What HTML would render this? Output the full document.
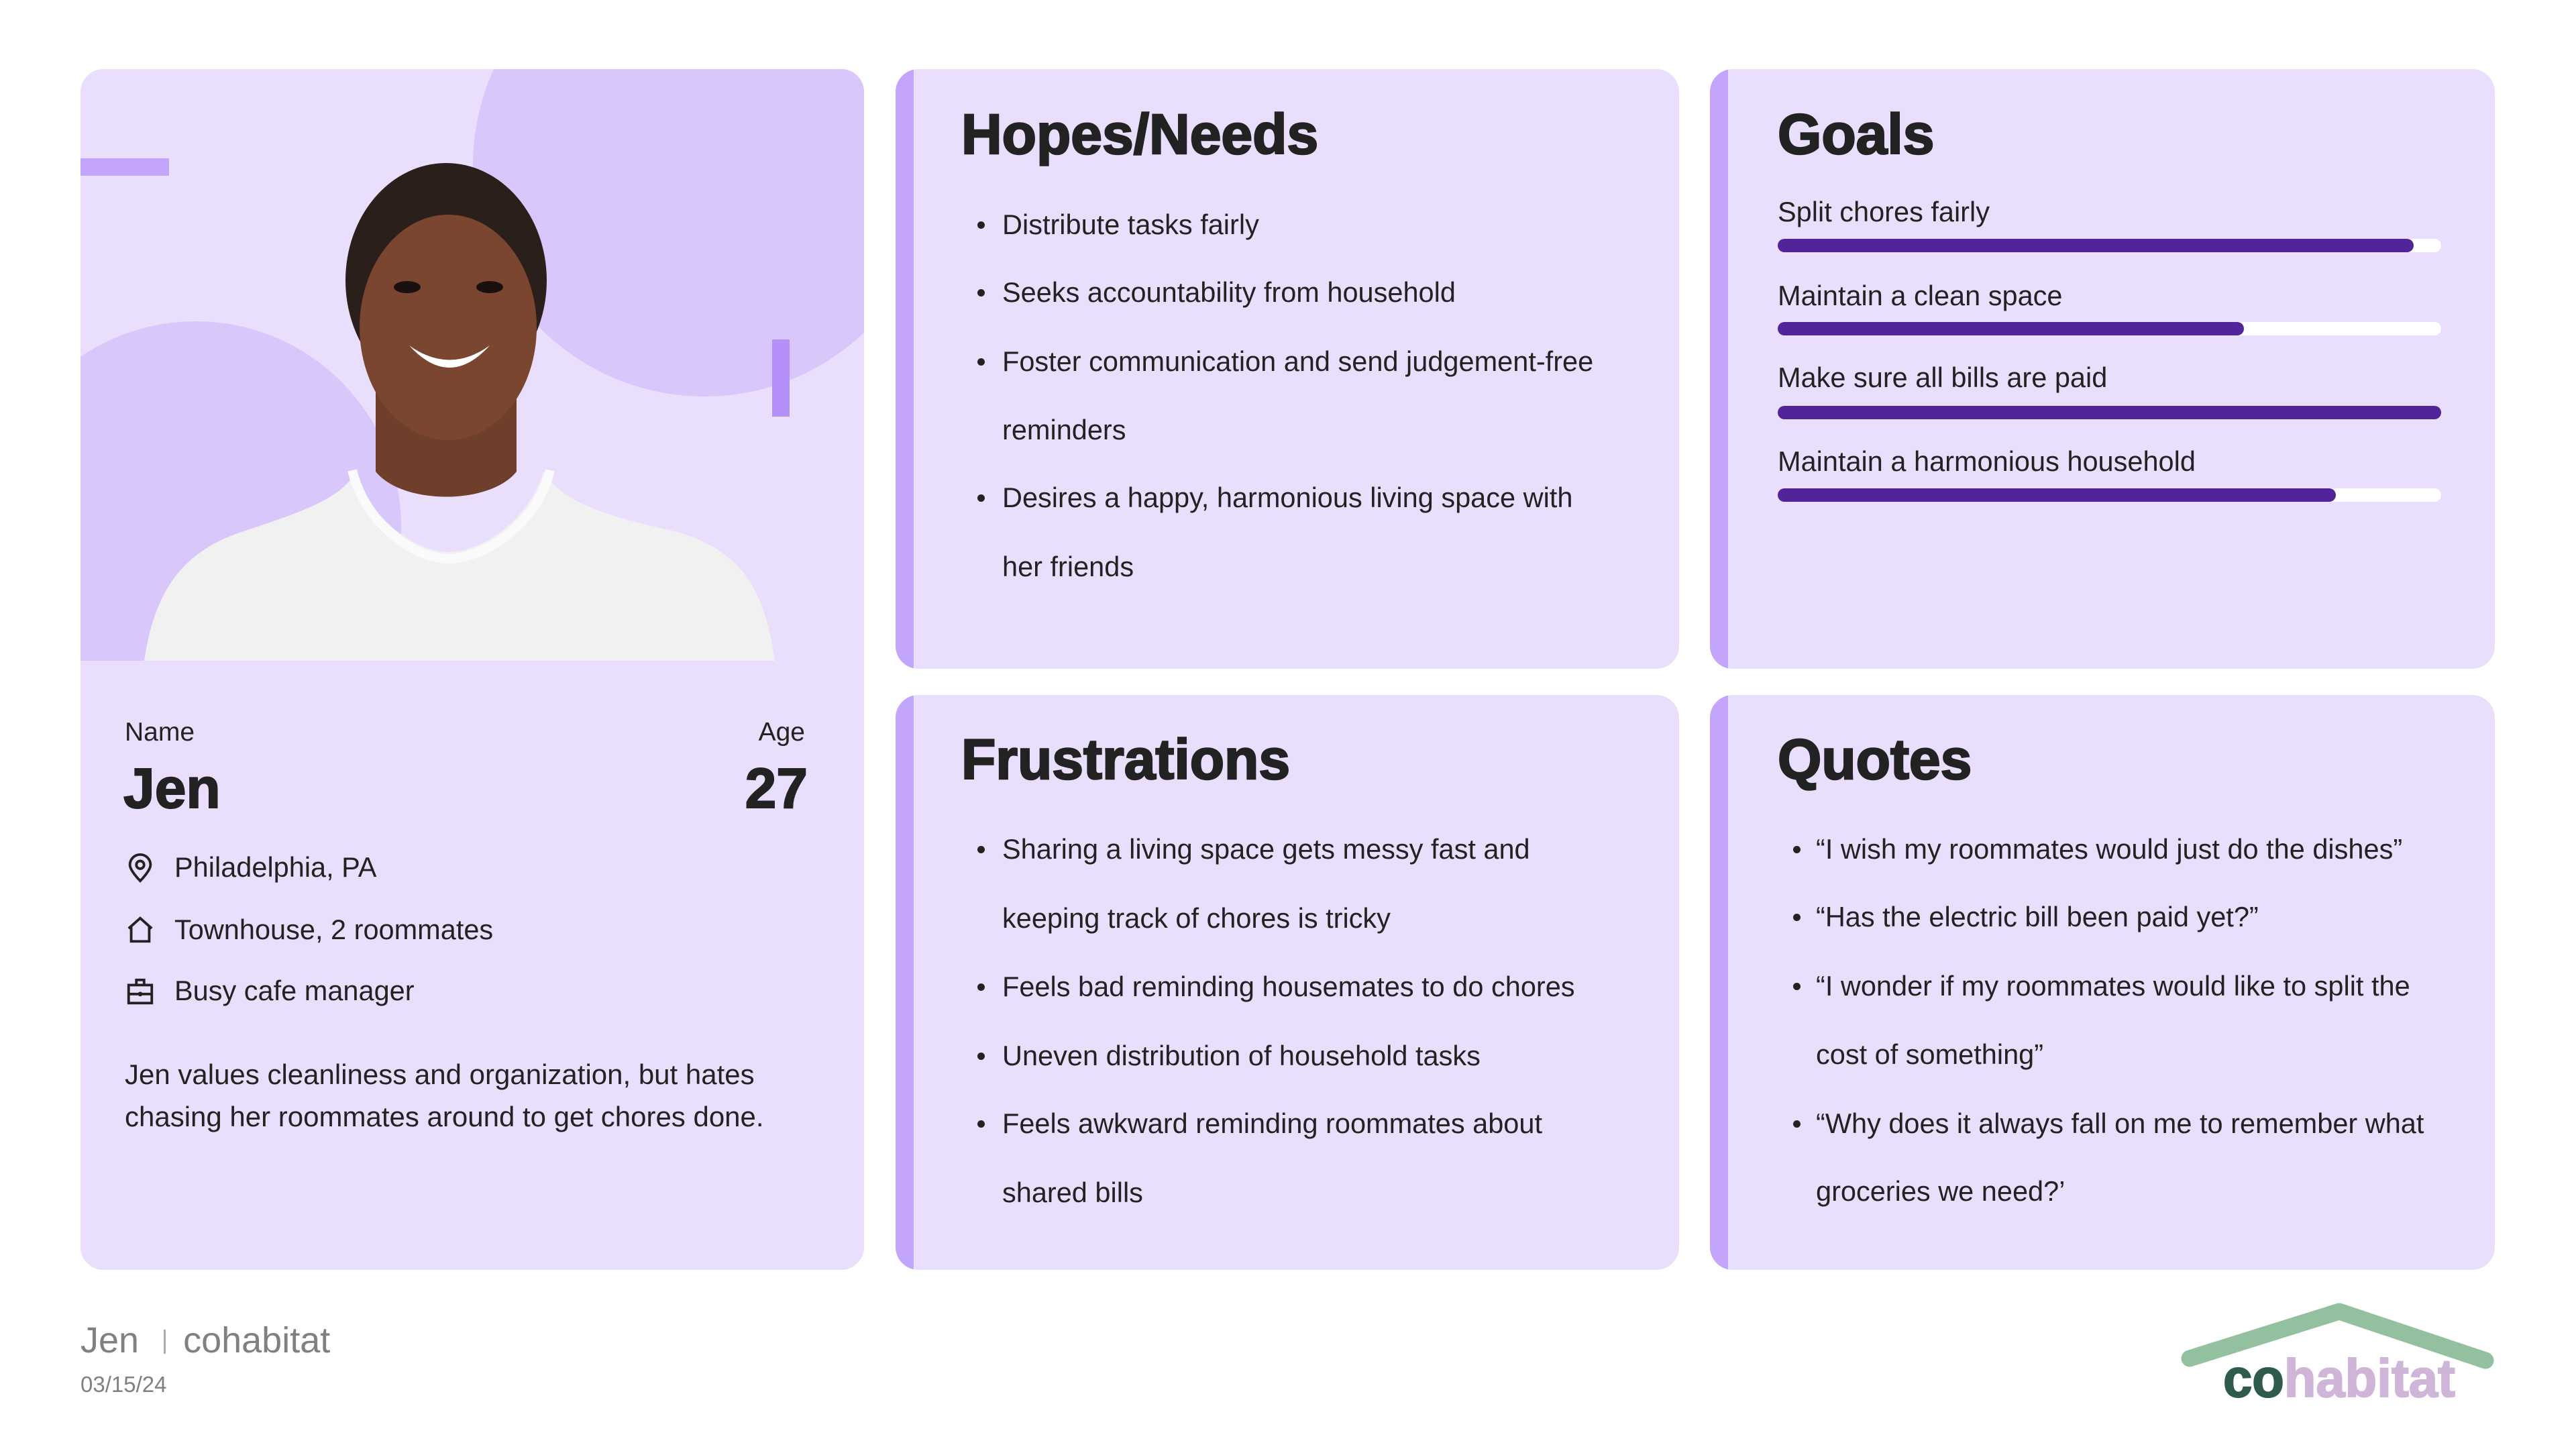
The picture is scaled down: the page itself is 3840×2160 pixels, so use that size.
<!DOCTYPE html>
<html><head><meta charset="utf-8"><style>
*{margin:0;padding:0;box-sizing:border-box}
body{width:3840px;height:2160px;background:#fff;position:relative;overflow:hidden;font-family:"Liberation Sans",sans-serif;color:#222}
.card{position:absolute;background:#e9dffd;border-radius:34px;overflow:hidden}
.acc{position:absolute;left:0;top:0;bottom:0;width:27px;background:#c4a5fc}
.h{position:absolute;font-weight:bold;font-size:84px;color:#222;line-height:100px;-webkit-text-stroke:2.5px #222}
.l{position:absolute;font-size:41.5px;line-height:60px;white-space:nowrap;color:#222}
.b{position:absolute;width:11px;height:11px;border-radius:50%;background:#222}
.track{position:absolute;left:2650px;width:989px;height:20px;border-radius:10px;background:#fff}
.fill{position:absolute;left:0;top:0;height:20px;border-radius:10px;background:#52249a}
</style></head><body>

<!-- Profile card -->
<div class="card" style="left:120px;top:103px;width:1168px;height:1790px">
<svg width="1168" height="1790" style="position:absolute;left:0;top:0">
<defs><clipPath id="ph"><rect x="0" y="0" width="1168" height="882"/></clipPath></defs>
<g clip-path="url(#ph)">
<circle cx="930" cy="143" r="345" fill="#d9c6fb"/>
<circle cx="172" cy="682" r="306" fill="#d9c6fb"/>
<rect x="0" y="133" width="132" height="26" fill="#c4a5fc"/>
<rect x="1031" y="403" width="26" height="115" fill="#b48ff8"/>
<path d="M440 470 L440 600 C480 650 610 650 650 600 L650 470 Z" fill="#6e3f2b"/>
<path d="M95 882 C110 780 150 720 240 690 C330 660 390 640 410 600 C430 670 500 720 548 720 C600 720 670 670 690 600 C720 650 800 670 890 690 C990 720 1020 780 1035 882 Z" fill="#f1f1f1"/>
<path d="M405 598 C425 680 500 730 548 730 C600 730 680 680 700 598" fill="none" stroke="#fafafa" stroke-width="14"/>
<ellipse cx="545" cy="315" rx="150" ry="175" fill="#2a1f1a"/>
<ellipse cx="548" cy="385" rx="132" ry="168" fill="#7a4630"/>
<ellipse cx="487" cy="325" rx="20" ry="9" fill="#1a1010"/>
<ellipse cx="610" cy="325" rx="20" ry="9" fill="#1a1010"/>
<path d="M490 412 Q550 455 610 412 Q550 478 490 412 Z" fill="#fff"/>
</g>
</svg>
<div class="l" style="left:66px;top:959px;font-size:39px">Name</div>
<div class="l" style="right:88px;top:959px;font-size:39px">Age</div>
<div style="position:absolute;left:64px;top:1022px;font-weight:bold;font-size:84px;line-height:100px;-webkit-text-stroke:2px #222">Jen</div>
<div style="position:absolute;right:84px;top:1022px;font-weight:bold;font-size:84px;line-height:100px;-webkit-text-stroke:2px #222">27</div>
<svg style="position:absolute;left:66px;top:1168px" width="46" height="46" viewBox="0 0 24 24" fill="none" stroke="#222" stroke-width="2"><path d="M12 22 C12 22 4 14 4 9.5 A8 8 0 0 1 20 9.5 C20 14 12 22 12 22Z"/><circle cx="12" cy="9.5" r="3"/></svg>
<div class="l" style="left:140px;top:1160px">Philadelphia, PA</div>
<svg style="position:absolute;left:66px;top:1260px" width="46" height="46" viewBox="0 0 24 24" fill="none" stroke="#222" stroke-width="2"><path d="M3 11 L12 3 L21 11 M5 9.5 V21 H19 V9.5"/></svg>
<div class="l" style="left:140px;top:1253px">Townhouse, 2 roommates</div>
<svg style="position:absolute;left:66px;top:1352px" width="46" height="46" viewBox="0 0 24 24" fill="none" stroke="#222" stroke-width="2"><rect x="3" y="7" width="18" height="14"/><path d="M9 7 V3 H15 V7 M3 14 H21"/><circle cx="12" cy="14" r="0.8" fill="#222"/></svg>
<div class="l" style="left:140px;top:1344px">Busy cafe manager</div>
<div class="l" style="left:66px;top:1469px;font-size:42px">Jen values cleanliness and organization, but hates</div>
<div class="l" style="left:66px;top:1532px;font-size:42px">chasing her roommates around to get chores done.</div>
</div>

<!-- Hopes -->
<div class="card" style="left:1335px;top:103px;width:1168px;height:894px"><div class="acc"></div></div>
<div class="h" style="left:1433px;top:150px">Hopes/Needs</div>
<div class="b" style="left:1457px;top:330px"></div><div class="l" style="left:1494px;top:305px">Distribute tasks fairly</div>
<div class="b" style="left:1457px;top:431px"></div><div class="l" style="left:1494px;top:406px">Seeks accountability from household</div>
<div class="b" style="left:1457px;top:534px"></div><div class="l" style="left:1494px;top:509px">Foster communication and send judgement-free</div>
<div class="l" style="left:1494px;top:611px">reminders</div>
<div class="b" style="left:1457px;top:737px"></div><div class="l" style="left:1494px;top:712px">Desires a happy, harmonious living space with</div>
<div class="l" style="left:1494px;top:815px">her friends</div>

<!-- Goals -->
<div class="card" style="left:2549px;top:103px;width:1170px;height:894px"><div class="acc"></div></div>
<div class="h" style="left:2650px;top:150px">Goals</div>
<div class="l" style="left:2650px;top:286px">Split chores fairly</div>
<div class="track" style="top:356px"><div class="fill" style="width:948px"></div></div>
<div class="l" style="left:2650px;top:411px">Maintain a clean space</div>
<div class="track" style="top:480px"><div class="fill" style="width:695px"></div></div>
<div class="l" style="left:2650px;top:533px">Make sure all bills are paid</div>
<div class="track" style="top:605px"><div class="fill" style="width:989px"></div></div>
<div class="l" style="left:2650px;top:658px">Maintain a harmonious household</div>
<div class="track" style="top:728px"><div class="fill" style="width:832px"></div></div>

<!-- Frustrations -->
<div class="card" style="left:1335px;top:1036px;width:1168px;height:857px"><div class="acc"></div></div>
<div class="h" style="left:1433px;top:1082px">Frustrations</div>
<div class="b" style="left:1457px;top:1261px"></div><div class="l" style="left:1494px;top:1236px">Sharing a living space gets messy fast and</div>
<div class="l" style="left:1494px;top:1339px">keeping track of chores is tricky</div>
<div class="b" style="left:1457px;top:1466px"></div><div class="l" style="left:1494px;top:1441px">Feels bad reminding housemates to do chores</div>
<div class="b" style="left:1457px;top:1569px"></div><div class="l" style="left:1494px;top:1544px">Uneven distribution of household tasks</div>
<div class="b" style="left:1457px;top:1670px"></div><div class="l" style="left:1494px;top:1645px">Feels awkward reminding roommates about</div>
<div class="l" style="left:1494px;top:1748px">shared bills</div>

<!-- Quotes -->
<div class="card" style="left:2549px;top:1036px;width:1170px;height:857px"><div class="acc"></div></div>
<div class="h" style="left:2650px;top:1082px">Quotes</div>
<div class="b" style="left:2673px;top:1261px"></div><div class="l" style="left:2707px;top:1236px">“I wish my roommates would just do the dishes”</div>
<div class="b" style="left:2673px;top:1362px"></div><div class="l" style="left:2707px;top:1337px">“Has the electric bill been paid yet?”</div>
<div class="b" style="left:2673px;top:1465px"></div><div class="l" style="left:2707px;top:1440px">“I wonder if my roommates would like to split the</div>
<div class="l" style="left:2707px;top:1542px">cost of something”</div>
<div class="b" style="left:2673px;top:1670px"></div><div class="l" style="left:2707px;top:1645px">“Why does it always fall on me to remember what</div>
<div class="l" style="left:2707px;top:1746px">groceries we need?’</div>

<!-- Footer -->
<div style="position:absolute;left:120px;top:1966px;font-size:54px;line-height:64px;color:#808080;white-space:nowrap">Jen <span style="display:inline-block;width:3px;height:36px;background:#aaa;margin:0 26px 0 22px;vertical-align:-2px"></span>cohabitat</div>
<div style="position:absolute;left:120px;top:2044px;font-size:33px;line-height:40px;color:#808080">03/15/24</div>

<!-- Logo -->
<svg style="position:absolute;left:3240px;top:1930px" width="520" height="210">
<path d="M24 95 L247 25 L465 98" fill="none" stroke="#93c09f" stroke-width="25" stroke-linecap="round" stroke-linejoin="round"/>
<text x="74" y="152" font-family="Liberation Sans" font-weight="bold" font-size="80" stroke-width="2" textLength="346" lengthAdjust="spacingAndGlyphs"><tspan fill="#2f5a4e" stroke="#2f5a4e">co</tspan><tspan fill="#cfb5d8" stroke="#cfb5d8">habitat</tspan></text>
</svg>
</body></html>
